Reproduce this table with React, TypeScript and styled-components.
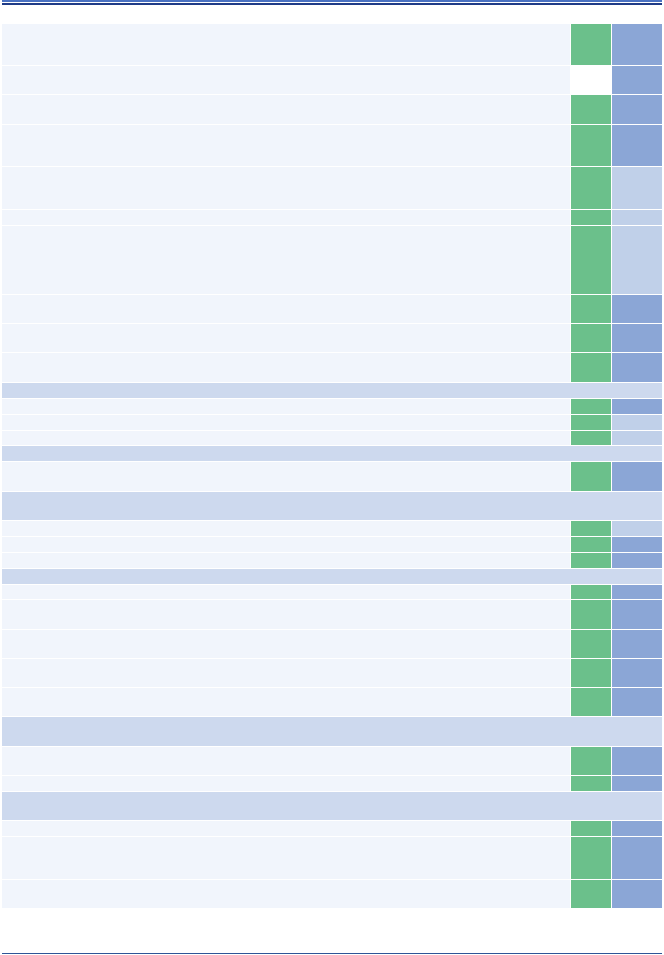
import React from 'react'
import styled, { createGlobalStyle } from 'styled-components'

type Tone = 'dark' | 'light'

type Row =
  | { kind: 'section'; h: number }
  | { kind: 'item'; h: number; mark?: boolean; tone: Tone }

const rows: Row[] = [
  { kind: 'item', h: 41, mark: true, tone: 'dark' },
  { kind: 'item', h: 28, mark: false, tone: 'dark' },
  { kind: 'item', h: 29, mark: true, tone: 'dark' },
  { kind: 'item', h: 41, mark: true, tone: 'dark' },
  { kind: 'item', h: 42, mark: true, tone: 'light' },
  { kind: 'item', h: 15, mark: true, tone: 'light' },
  { kind: 'item', h: 68, mark: true, tone: 'light' },
  { kind: 'item', h: 28, mark: true, tone: 'dark' },
  { kind: 'item', h: 28, mark: true, tone: 'dark' },
  { kind: 'item', h: 29, mark: true, tone: 'dark' },
  { kind: 'section', h: 15 },
  { kind: 'item', h: 15, mark: true, tone: 'dark' },
  { kind: 'item', h: 15, mark: true, tone: 'light' },
  { kind: 'item', h: 14, mark: true, tone: 'light' },
  { kind: 'section', h: 15 },
  { kind: 'item', h: 29, mark: true, tone: 'dark' },
  { kind: 'section', h: 28 },
  { kind: 'item', h: 15, mark: true, tone: 'light' },
  { kind: 'item', h: 15, mark: true, tone: 'dark' },
  { kind: 'item', h: 15, mark: true, tone: 'dark' },
  { kind: 'section', h: 15 },
  { kind: 'item', h: 14, mark: true, tone: 'dark' },
  { kind: 'item', h: 29, mark: true, tone: 'dark' },
  { kind: 'item', h: 28, mark: true, tone: 'dark' },
  { kind: 'item', h: 28, mark: true, tone: 'dark' },
  { kind: 'item', h: 28, mark: true, tone: 'dark' },
  { kind: 'section', h: 29 },
  { kind: 'item', h: 28, mark: true, tone: 'dark' },
  { kind: 'item', h: 15, mark: true, tone: 'dark' },
  { kind: 'section', h: 28 },
  { kind: 'item', h: 15, mark: true, tone: 'dark' },
  { kind: 'item', h: 42, mark: true, tone: 'dark' },
  { kind: 'item', h: 28, mark: true, tone: 'dark' },
]

const GlobalStyle = createGlobalStyle`
  body {
    margin: 0;
    background: #ffffff;
    font-family: 'Liberation Sans', Arial, sans-serif;
  }
`

const Page = styled.div`
  width: 664px;
  height: 955px;
  padding: 0 2px;
  box-sizing: border-box;
  display: flex;
  flex-direction: column;
`

// double rule: blue line, thin white gap, navy line
const TopRule = styled.div`
  height: 2px;
  background: #4a72c2;
  box-shadow: 0 1px 0 #ffffff, 0 3px 0 #1f3c88;
  margin-bottom: 22px;
`

const Table = styled.div`
  display: flex;
  flex-direction: column;
  gap: 1px;
`

const ItemRow = styled.div<{ $h: number }>`
  display: grid;
  grid-template-columns: 568px 40px 50px;
  column-gap: 1px;
  height: ${({ $h }) => $h}px;
`

const Label = styled.div`
  background: #f1f5fc;
  font-size: 11px;
  line-height: 14px;
  color: #1f2a44;
`

const Mark = styled.div<{ $on: boolean }>`
  background: ${({ $on }) => ($on ? '#6bc08b' : '#ffffff')};
`

const Level = styled.div<{ $tone: Tone }>`
  background: ${({ $tone }) => ($tone === 'dark' ? '#8ba6d6' : '#c0d0e9')};
`

const SectionRow = styled.div<{ $h: number }>`
  height: ${({ $h }) => $h}px;
  background: #cdd9ee;
`

const Spacer = styled.div`
  flex: 1;
`

const BottomRule = styled.div`
  height: 1px;
  background: #2f5597;
  margin-bottom: 1px;
`

export default function App() {
  return (
    <>
      <GlobalStyle />
      <Page>
        <TopRule />
        <Table>
          {rows.map((row, i) =>
            row.kind === 'section' ? (
              <SectionRow key={i} $h={row.h} />
            ) : (
              <ItemRow key={i} $h={row.h}>
                <Label />
                <Mark $on={!!row.mark} />
                <Level $tone={row.tone} />
              </ItemRow>
            ),
          )}
        </Table>
        <Spacer />
        <BottomRule />
      </Page>
    </>
  )
}
